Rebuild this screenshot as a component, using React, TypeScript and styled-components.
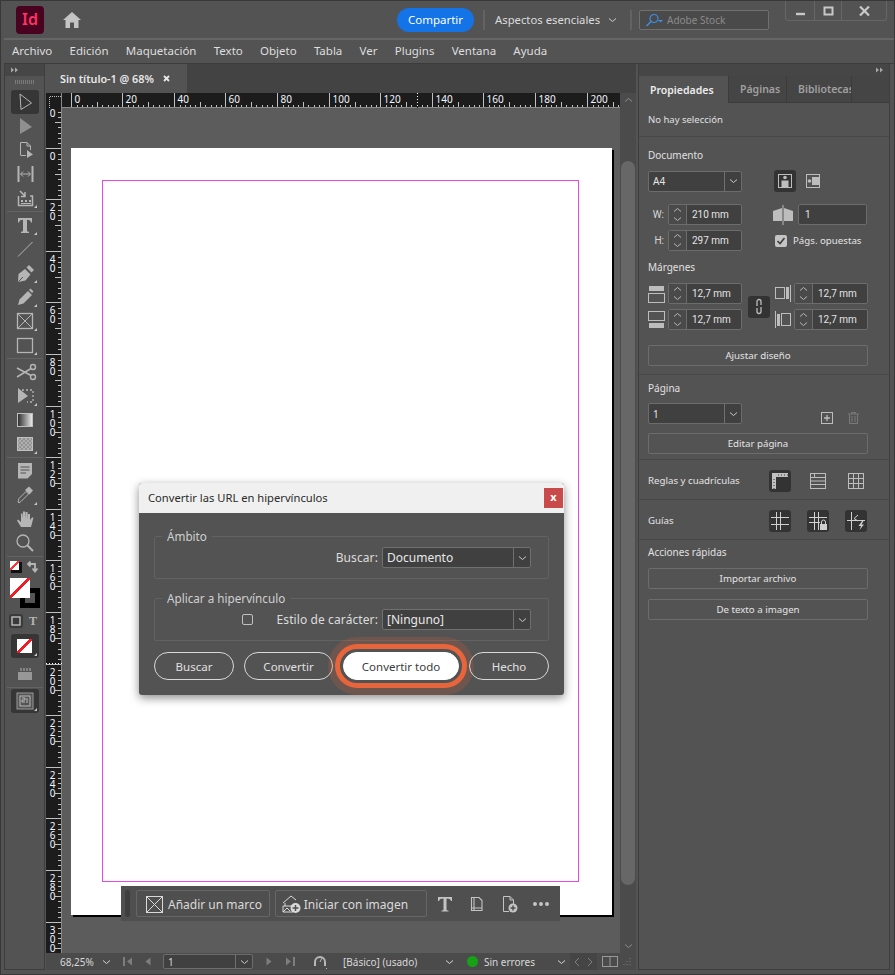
import React from 'react';
import styled, { createGlobalStyle } from 'styled-components';

const Global = createGlobalStyle`
  html, body { margin: 0; padding: 0; background: #535353; }
  * { box-sizing: border-box; }
  body { font-family: "Noto Sans", "Open Sans", sans-serif; color: #e4e4e4; font-size: 10.5px; }
`;

const Shell = styled.div`
  width: 895px;
  height: 975px;
  display: flex;
  flex-direction: column;
  background: #535353;
  border: 1px solid #383838;
  overflow: hidden;
`;

/* ---------- top bars ---------- */
const TitleBar = styled.header`
  height: 39px;
  margin-left: 3px;
  flex: none;
  display: flex;
  align-items: center;
  border-bottom: 2px solid #666;
  padding-left: 12px;
`;
const Logo = styled.div`
  width: 28px;
  height: 28px;
  border-radius: 4px;
  background: #49021f;
  color: #ff3366;
  font-weight: 600;
  font-size: 16px;
  line-height: 26px;
  text-align: center;
`;
const HomeIcon = styled.svg`
  margin-left: 19px;
  color: #c4c4c4;
`;
const ShareButton = styled.button`
  margin-left: 316px;
  width: 77px;
  height: 24px;
  border: 0;
  border-radius: 12px;
  background: #1473e6;
  color: #fff;
  font: inherit;
  font-size: 11.5px;
  padding: 0;
`;
const TitleSep = styled.span<{ $ml: number }>`
  width: 2px;
  height: 20px;
  margin-left: ${p => p.$ml}px;
  background: #636363;
`;
const WorkspaceName = styled.span`
  margin-left: 10px;
  width: 104px;
  flex: none;
  white-space: nowrap;
  font-size: 11.3px;
  color: #dcdcdc;
`;
const WorkspaceArrow = styled.span`
  margin-left: 9px;
  color: #cfcfcf;
`;
const StockSearch = styled.div`
  margin-left: 7px;
  width: 130px;
  height: 20px;
  border: 1px solid #6f6f6f;
  border-radius: 2px;
  background: #4a4a4a;
  display: flex;
  align-items: center;
  gap: 3px;
  color: #8a8a8a;
  font-size: 10px;
  padding-left: 4px;
`;
const SearchGlyph = styled.span`
  color: #3f8fe8;
`;
const WindowControls = styled.div`
  align-self: flex-start;
  margin-left: 16px;
  width: 102px;
  height: 20px;
  display: flex;
  border: 1px solid #666;
  border-top: 0;
  border-radius: 0 0 4px 4px;
  color: #c8c8c8;
`;
const WinButton = styled.div<{ $w: number }>`
  width: ${p => p.$w}px;
  display: flex;
  align-items: center;
  justify-content: center;
  & + & { border-left: 1px solid #666; }
`;
const MenuBar = styled.nav`
  height: 24px;
  flex: none;
  display: flex;
  align-items: center;
  gap: 17.25px;
  padding: 0 0 2px 8px;
  margin-left: 3px;
  font-size: 11.5px;
  color: #dedede;
  border-bottom: 1px solid #3c3c3c;
`;

/* ---------- main layout ---------- */
const Main = styled.div`
  flex: 1;
  min-height: 0;
  display: flex;
  padding: 0 4px 4px 3px;
`;

/* ---------- tools ---------- */
const Toolbox = styled.aside`
  width: 41px;
  flex: none;
  margin-right: 1px;
  border: 1px solid #3e3e3e;
  border-top: 0;
  display: flex;
  flex-direction: column;
  align-items: center;
`;
const ToolboxHead = styled.div`
  width: 100%;
  height: 12px;
  flex: none;
  background: #464646;
  color: #a8a8a8;
  display: flex;
  align-items: center;
  padding-left: 5px;
`;
const Grip = styled.div`
  width: 20px;
  height: 4px;
  margin: 4px 0 6px;
  flex: none;
  background: repeating-linear-gradient(90deg, #7a7a7a 0 1px, transparent 1px 2px);
`;
const ToolButton = styled.div<{ $on?: boolean; $flyout?: boolean; $mt?: number; $dim?: boolean }>`
  width: 28px;
  height: 24px;
  flex: none;
  margin-top: ${p => p.$mt ?? 0}px;
  position: relative;
  display: flex;
  align-items: center;
  justify-content: center;
  color: ${p => (p.$dim ? '#8f8f8f' : '#b5b5b5')};
  border-radius: 3px;
  background: ${p => (p.$on ? '#363636' : 'transparent')};
  ${p => p.$flyout && `
    &::after {
      content: '';
      position: absolute;
      right: 2px;
      bottom: 2px;
      border-left: 3px solid transparent;
      border-bottom: 3px solid #c8c8c8;
    }
  `}
`;
const ToolSep = styled.div`
  width: 36px;
  height: 1px;
  flex: none;
  margin: 1px 0;
  background: #636363;
`;
const ColorWell = styled.div`
  position: relative;
  width: 32px;
  height: 50px;
  flex: none;
  margin-top: 1px;
`;
const MiniSwatch = styled.div`
  position: absolute;
  left: 1px;
  top: 2px;
  width: 9px;
  height: 9px;
  background: linear-gradient(135deg, #fff 44%, #f33 44% 56%, #fff 56%);
  box-shadow: 2px 2px 0 0 #111, 2px 2px 0 1px #111;
`;
const SwapIcon = styled.svg`
  position: absolute;
  right: 2px;
  top: 2px;
  color: #b5b5b5;
`;
const FillSwatch = styled.div`
  position: absolute;
  left: 1px;
  top: 19px;
  width: 20px;
  height: 20px;
  z-index: 1;
  background: linear-gradient(135deg, #fff 45%, #f01c25 45% 55%, #fff 55%);
`;
const StrokeSwatch = styled.div`
  position: absolute;
  left: 11px;
  top: 29px;
  width: 20px;
  height: 20px;
  background: #555;
  border: 5px solid #000;
`;
const FormatRow = styled.div`
  display: flex;
  gap: 3px;
  align-items: center;
  margin-top: 5px;
  flex: none;
  color: #b5b5b5;
`;
const FormatBox = styled.div`
  width: 14px;
  height: 14px;
  background: #3a3a3a;
  border-radius: 3px;
  display: flex;
  align-items: center;
  justify-content: center;
`;
const ApplyNone = styled.div`
  width: 15px;
  height: 14px;
  background: linear-gradient(135deg, #fff 42%, #f01c25 42% 58%, #fff 58%);
`;
const FormatT = styled.span`
  font-family: "Liberation Serif", serif;
  font-weight: 700;
  font-size: 12px;
  line-height: 14px;
  width: 14px;
  text-align: center;
`;

/* ---------- document area ---------- */
const DocArea = styled.section`
  width: 590px;
  flex: none;
  margin-right: 2px;
  display: flex;
  flex-direction: column;
  min-height: 0;
`;
const DocTabs = styled.div`
  height: 29px;
  flex: none;
  display: flex;
  background: #434343;
`;
const DocTab = styled.div`
  width: 141px;
  background: #535353;
  display: flex;
  align-items: center;
  padding-left: 14px;
  gap: 9px;
  font-weight: 600;
  font-size: 10.8px;
  color: #e8e8e8;
`;
const DocBody = styled.div`
  flex: 1;
  min-height: 0;
  display: flex;
`;
const RulerCol = styled.div`
  width: 574px;
  flex: none;
  display: flex;
  flex-direction: column;
`;
const RulerRow = styled.div`
  height: 15px;
  flex: none;
  display: flex;
  background: #1c1c1c;
`;
const RulerCorner = styled.svg`
  display: block;
  flex: none;
`;
const HRulerSvg = styled.svg`
  display: block;
  flex: none;
`;
const VRulerSvg = styled.svg`
  display: block;
  flex: none;
  background: #1c1c1c;
`;
const RulerDigits = styled.text`
  writing-mode: vertical-rl;
  text-orientation: upright;
  letter-spacing: -4.6px;
  font-size: 10px;
  fill: #f2f6ff;
  stroke: none;
`;
const CanvasRow = styled.div`
  flex: 1;
  min-height: 0;
  display: flex;
`;
const Canvas = styled.div`
  position: relative;
  flex: 1;
  background: #5c5c5c;
  overflow: hidden;
`;
const Page = styled.div`
  position: absolute;
  left: 9px;
  top: 40px;
  width: 541px;
  height: 767px;
  padding: 32px 33px 33px 31px;
  background: #fff;
  box-shadow: 2px 2px 0 #000;
  display: flex;
`;
const MarginGuide = styled.div`
  flex: 1;
  border: 1px solid #e64be6;
`;
const ScrollBar = styled.div`
  width: 16px;
  flex: none;
  background: #4b4b4b;
  display: flex;
  flex-direction: column;
  align-items: center;
  color: #8d8d8d;
  padding: 4px 0;
`;
const ScrollThumb = styled.div`
  flex: 1;
  width: 14px;
  margin: 58px 0;
  border-radius: 7px;
  background: #676767;
`;

/* ---------- dialog ---------- */
const Dialog = styled.div`
  position: absolute;
  left: 77px;
  top: 375px;
  width: 425px;
  height: 212px;
  background: #535353;
  border-radius: 3px;
  box-shadow: 0 3px 10px rgba(0, 0, 0, 0.45);
  overflow: hidden;
  font-size: 12px;
  color: #dcdcdc;
`;
const DialogTitle = styled.div`
  height: 30px;
  background: #f0f0f0;
  color: #2a2a2a;
  display: flex;
  align-items: center;
  justify-content: space-between;
  padding: 0 1px 2px 9px;
  font-size: 11.2px;
`;
const CloseBox = styled.div`
  width: 19px;
  height: 20px;
  margin-top: 2px;
  background: #c84a4a;
  color: #fff;
  font-size: 11px;
  font-weight: 700;
  line-height: 18px;
  text-align: center;
`;
const DialogBody = styled.div`
  padding: 16px 15px 0;
  display: flex;
  flex-direction: column;
  gap: 12px;
`;
const Group = styled.fieldset`
  margin: 0;
  height: 50px;
  padding: 4px 17px 0 0;
  border: 1px solid #626262;
  border-radius: 2px;
  display: flex;
  align-items: center;
  justify-content: flex-end;
  gap: 4px;
  width: 395px;
`;
const GroupLegend = styled.legend`
  margin-left: 7px;
  padding: 0 5px;
  font-size: 11.7px;
  line-height: 14px;
  color: #d0d0d0;
`;
const GroupLabel = styled.span`
  letter-spacing: 0.1px;
`;
const DialogSelect = styled.div`
  width: 149px;
  height: 21px;
  display: flex;
  border: 1px solid #707070;
  border-radius: 2px;
  background: #404040;
  color: #e8e8e8;
  padding-left: 4px;
  align-items: center;
  justify-content: space-between;
`;
const DropArrow = styled.div`
  width: 17px;
  height: 100%;
  border-left: 1px solid #707070;
  display: flex;
  align-items: center;
  justify-content: center;
  color: #c8c8c8;
  flex: none;
`;
const DialogCheck = styled.span`
  width: 11px;
  height: 11px;
  border: 1px solid #c0c0c0;
  border-radius: 2px;
  margin-right: 20px;
`;
const DialogButtons = styled.div`
  display: flex;
  gap: 10px;
  margin-top: -1px;
`;
const Pill = styled.button<{ $w: number; $primary?: boolean }>`
  width: ${p => p.$w}px;
  height: 28px;
  padding: 0;
  border-radius: 14px;
  font: inherit;
  font-size: 11.5px;
  border: 1px solid ${p => (p.$primary ? '#fff' : '#d8d8d8')};
  background: ${p => (p.$primary ? '#fff' : 'transparent')};
  color: ${p => (p.$primary ? '#3c3c3c' : '#e0e0e0')};
  ${p => p.$primary && `
    box-shadow: 0 0 0 3px #535353, 0 0 0 8px #e8643a, 0 0 0 15px rgba(232, 100, 58, 0.18);
  `}
`;

/* ---------- contextual bar ---------- */
const ContextBar = styled.div`
  position: absolute;
  left: 59px;
  top: 778px;
  width: 439px;
  height: 35px;
  background: #4f4f4f;
  display: flex;
  align-items: center;
  padding-left: 4px;
  color: #c4c4c4;
`;
const BarGrip = styled.div`
  width: 5px;
  height: 27px;
  border-radius: 3px;
  background: #3e3e3e;
  margin-right: 6px;
`;
const BarButton = styled.div<{ $w: number; $pl: number; $gap: number }>`
  width: ${p => p.$w}px;
  height: 27px;
  margin-right: 5px;
  border: 1px solid #666;
  border-radius: 2px;
  display: flex;
  align-items: center;
  gap: ${p => p.$gap}px;
  padding: 1px 0 0 ${p => p.$pl}px;
  font-size: 12px;
  color: #dadada;
`;
const BarIcon = styled.div<{ $w: number }>`
  width: ${p => p.$w}px;
  display: flex;
  justify-content: center;
  align-items: center;
`;

/* ---------- status bar ---------- */
const StatusBar = styled.footer`
  height: 17px;
  flex: none;
  display: flex;
  align-items: center;
  background: #4b4b4b;
  color: #d8d8d8;
  font-size: 10px;
`;
const StatusCell = styled.div<{ $w: number; $ml?: number; $dim?: boolean }>`
  width: ${p => p.$w}px;
  height: 100%;
  flex: none;
  margin-left: ${p => p.$ml ?? 0}px;
  display: flex;
  align-items: center;
  justify-content: center;
  color: ${p => (p.$dim ? '#7d7d7d' : 'inherit')};
`;
const StatusText = styled.span<{ $w: number; $ml?: number }>`
  width: ${p => p.$w}px;
  flex: none;
  margin-left: ${p => p.$ml ?? 0}px;
  white-space: nowrap;
`;
const PageBox = styled.div`
  width: 90px;
  height: 15px;
  flex: none;
  margin-left: 8px;
  display: flex;
  align-items: center;
  justify-content: space-between;
  padding-left: 4px;
  border: 1px solid #6c6c6c;
  border-radius: 2px;
  background: #404040;
`;
const GreenDot = styled.span`
  width: 11px;
  height: 11px;
  flex: none;
  margin-left: 12px;
  border-radius: 50%;
  background: #16a116;
`;
const NavBox = styled.div`
  width: 27px;
  height: 100%;
  flex: none;
  margin-left: 3px;
  background: #454545;
  display: flex;
  align-items: center;
  justify-content: space-around;
  color: #7f7f7f;
`;

/* ---------- properties panel ---------- */
const PanelColumn = styled.aside`
  width: 252px;
  flex: none;
  border: 1px solid #3e3e3e;
  border-top: 0;
  display: flex;
  flex-direction: column;
`;
const PanelHead = styled.div`
  height: 12px;
  flex: none;
  background: #464646;
  color: #a8a8a8;
  display: flex;
  justify-content: flex-end;
  align-items: center;
  padding-right: 5px;
`;
const PanelTabs = styled.div`
  height: 27px;
  flex: none;
  display: flex;
  background: #454545;
  border-bottom: 1px solid #3c3c3c;
`;
const PanelTab = styled.div<{ $w: number; $on?: boolean }>`
  width: ${p => p.$w}px;
  flex: none;
  display: flex;
  align-items: center;
  padding-left: 11px;
  overflow: hidden;
  white-space: nowrap;
  font-weight: 600;
  font-size: 10.5px;
  color: ${p => (p.$on ? '#ececec' : '#a0a0a0')};
  background: ${p => (p.$on ? '#535353' : 'transparent')};
  border-right: 1px solid #3c3c3c;
  ${p => p.$on && 'height: 27px;'}
`;
const Section = styled.div<{ $h: number; $row?: boolean; $last?: boolean }>`
  height: ${p => p.$h}px;
  flex: none;
  padding: ${p => (p.$row ? '2px 21px 0 9px' : '0 21px 0 9px')};
  border-bottom: ${p => (p.$last ? '0' : '1px solid #484848')};
  display: flex;
  flex-direction: ${p => (p.$row ? 'row' : 'column')};
  font-size: 9.7px;
`;
const SectionLabel = styled.div<{ $mt: number; $mb: number; $size?: number }>`
  margin: ${p => p.$mt}px 0 ${p => p.$mb}px;
  height: 14px;
  line-height: 14px;
  white-space: nowrap;
  font-size: ${p => p.$size ?? 10}px;
  color: #e0e0e0;
`;
const Row = styled.div<{ $mt?: number }>`
  display: flex;
  align-items: center;
  justify-content: space-between;
  margin-top: ${p => p.$mt ?? 0}px;
`;
const Cluster = styled.div<{ $w?: number; $gap?: number; $pl?: number }>`
  display: flex;
  align-items: center;
  gap: ${p => p.$gap ?? 0}px;
  width: ${p => (p.$w ? `${p.$w}px` : 'auto')};
  padding-left: ${p => p.$pl ?? 0}px;
`;
const PageActions = styled.div`
  display: flex;
  align-items: center;
  gap: 15px;
  margin: 8px 8px 0 0;
`;
const Select = styled.div`
  width: 94px;
  height: 21px;
  display: flex;
  align-items: center;
  justify-content: space-between;
  padding-left: 4px;
  background: #404040;
  border: 1px solid #6c6c6c;
  border-radius: 2px;
  color: #e4e4e4;
  font-size: 10px;
`;
const PlainInput = styled.div`
  width: 69px;
  height: 21px;
  display: flex;
  align-items: center;
  padding-left: 6px;
  background: #404040;
  border: 1px solid #6c6c6c;
  border-radius: 2px;
  color: #e4e4e4;
  font-family: Roboto, sans-serif;
  font-size: 10px;
`;
const FieldLabel = styled.span`
  width: 20px;
  flex: none;
  text-align: right;
  padding-right: 4px;
  color: #d8d8d8;
  font-family: Roboto, sans-serif;
  font-size: 10px;
`;
const FieldBox = styled.div`
  width: 74px;
  height: 21px;
  display: flex;
  background: #404040;
  border: 1px solid #6c6c6c;
  border-radius: 2px;
  color: #e4e4e4;
`;
const Stepper = styled.div`
  width: 18px;
  flex: none;
  background: #4a4a4a;
  border-right: 1px solid #6c6c6c;
  display: flex;
  flex-direction: column;
  align-items: center;
  justify-content: space-around;
  color: #b8b8b8;
`;
const FieldValue = styled.span`
  padding-left: 5px;
  line-height: 19px;
  white-space: nowrap;
  font-family: Roboto, sans-serif;
  font-size: 10px;
`;
const SquareToggle = styled.div<{ $on?: boolean }>`
  width: 22px;
  height: 22px;
  flex: none;
  border-radius: 3px;
  display: flex;
  align-items: center;
  justify-content: center;
  color: #bdbdbd;
  background: ${p => (p.$on ? '#333' : 'transparent')};
`;
const CheckBox = styled.span`
  width: 12px;
  height: 12px;
  flex: none;
  border-radius: 2px;
  background: #c4c4c4;
  color: #3c3c3c;
  display: flex;
  align-items: center;
  justify-content: center;
`;
const IconSlot = styled.div<{ $w: number; $dim?: boolean }>`
  width: ${p => p.$w}px;
  flex: none;
  display: flex;
  justify-content: flex-start;
  color: ${p => (p.$dim ? '#7a7a7a' : '#bdbdbd')};
`;
const MarginStack = styled.div`
  display: flex;
  flex-direction: column;
  gap: 5px;
`;
const WideButton = styled.div<{ $mt: number }>`
  width: 220px;
  height: 21px;
  flex: none;
  margin-top: ${p => p.$mt}px;
  border: 1px solid #6c6c6c;
  border-radius: 2px;
  display: flex;
  align-items: center;
  justify-content: center;
  color: #e4e4e4;
`;
const InlineRow = styled.div`
  flex: 1;
  display: flex;
  align-items: center;
  justify-content: space-between;
`;
const ToggleSet = styled.div`
  display: flex;
  gap: 16px;
  margin-right: 1px;
`;
const GlyphSvg = styled.svg`
  display: block;
  flex: none;
`;

/* ---------- drawings ---------- */
const Svg = ({ s = 24, w, h, children }: { s?: number; w?: number; h?: number; children: React.ReactNode }) => (
  <GlyphSvg width={w ?? s} height={h ?? s} viewBox={`0 0 ${w ?? s} ${h ?? s}`} fill="none" stroke="currentColor" strokeWidth="1">
    {children}
  </GlyphSvg>
);

const Chevron = ({ up }: { up?: boolean }) => (
  <Svg w={9} h={6}><path d={up ? 'M1 4.5 4.5 1.5 8 4.5' : 'M1 1.5 4.5 4.5 8 1.5'} /></Svg>
);
const DoubleArrow = () => (
  <Svg w={9} h={6}><path d="M1 .5 4 3 1 5.5ZM5 .5 8 3 5 5.5Z" fill="currentColor" stroke="none" /></Svg>
);

const toolIcons: Record<string, React.ReactNode> = {
  select: <path d="M7 4 18.5 13 8 19.5Z" />,
  direct: <path d="M7 4 19 13 7 20Z" fill="currentColor" stroke="none" />,
  page: <><path d="M7.5 17V4.5H14L17.5 8V12M14 4.5V8H17.5M7.5 17.5H13" /><path d="M14 12 20 16.5 14 20Z" fill="currentColor" stroke="none" /></>,
  gap: <><path d="M5.5 4V20M19.5 4V20" strokeWidth="2" /><path d="M8 12H17M10 9.5 7.5 12 10 14.5M15 9.5 17.5 12 15 14.5" /></>,
  collect: <><path d="M5.5 10V19.5H19.5V10H17" strokeWidth="1.5" /><path d="M7 5 12 10M12 6V10.5H8" strokeWidth="1.5" /><path d="M8 14H10V16H8ZM12 14H14V16H12ZM16 14H18V16H16ZM8 17H18V18H8Z" fill="currentColor" stroke="none" /></>,
  type: <path d="M5 5H19V9.5H18C17.5 7.5 16.5 6.8 14 6.8V17.5C14 18.5 14.8 18.8 16 18.8V20H8V18.8C9.2 18.8 10 18.5 10 17.5V6.8C7.5 6.8 6.5 7.5 6 9.5H5Z" fill="currentColor" stroke="none" />,
  line: <path d="M5 19.5 19.5 5" />,
  pen: <><path d="M5 21 5.5 13 12 8 17.5 13.5 12.5 19.5Z" fill="currentColor" stroke="none" /><path d="M13.5 6.5 16 4 21 9 18.5 11.5Z" fill="currentColor" stroke="none" /><path d="M5.5 20.5 10 16" stroke="#535353" /></>,
  pencil: <><path d="M5 20 6.5 14.5 15 6 19 10 10.5 18.5Z" fill="currentColor" stroke="none" /><path d="M16 5 17.5 3.5 20.5 6.5 19 8Z" fill="currentColor" stroke="none" /></>,
  frame: <><rect x="4.5" y="4.5" width="15" height="15" strokeWidth="1.3" /><path d="M4.5 4.5 19.5 19.5M19.5 4.5 4.5 19.5" /></>,
  rect: <rect x="4.5" y="5.5" width="15" height="14" strokeWidth="1.3" />,
  scissors: <><circle cx="20" cy="7" r="2.5" strokeWidth="1.4" /><circle cx="20" cy="17" r="2.5" strokeWidth="1.4" /><path d="M4 8 18 15.5M4 17 18 8.5" strokeWidth="1.5" /></>,
  transform: <><path d="M5 4 15 12 5 19Z" fill="currentColor" stroke="none" /><path d="M9 6H20V18H14" strokeDasharray="2 2" strokeWidth="1.3" /></>,
  gradient: <><defs><linearGradient id="toolGrad" x1="0" x2="1"><stop offset="0" stopColor="#2a2a2a" /><stop offset="1" stopColor="#eee" /></linearGradient></defs><rect x="4.5" y="5.5" width="15" height="13" fill="url(#toolGrad)" stroke="#c0c0c0" /></>,
  feather: <><defs><pattern id="toolCheck" width="4" height="4" patternUnits="userSpaceOnUse"><rect width="4" height="4" fill="#999" /><rect width="2" height="2" fill="#2f2f2f" /><rect x="2" y="2" width="2" height="2" fill="#2f2f2f" /></pattern></defs><rect x="4.5" y="5.5" width="15" height="13" fill="url(#toolCheck)" stroke="#c0c0c0" /></>,
  note: <><path d="M5 4H19V15L14.5 19.5H5Z" fill="currentColor" stroke="none" /><path d="M7.5 8H16.5M7.5 11H16.5M7.5 14H13" stroke="#535353" /></>,
  dropper: <><path d="M6 20 5 19 6 15.5 13 8.5 15.5 11 8.5 18Z" /><path d="M12 7 16 3.5 20 7.5 16.5 11.5Z" fill="currentColor" stroke="none" /></>,
  hand: <path d="M8 20 4 13.5 5 12.5 8 15V6.5H9.5L10 12V4.5H12L12.5 12V5H14.5L15 12.5V7H17V13L19 10.5H20.5L18 20Z" fill="currentColor" stroke="none" />,
  zoom: <><circle cx="10" cy="10" r="6" strokeWidth="1.3" /><path d="M14.5 14.5 20 20" strokeWidth="2" /></>,
  gapTool: <><path d="M5 10H19V18H5Z" fill="currentColor" stroke="none" opacity=".7" /><path d="M8 6V9M11 6V9M14 6V9M17 6V9" /></>,
  screen: <><rect x="4" y="4" width="16" height="16" fill="#555" stroke="#999" /><rect x="7" y="7" width="10" height="10" stroke="#bbb" /><path d="M9 9H12V11H9V13H12M14 9V14" stroke="#bbb" /></>,
};
const Tool = ({ name, on, flyout, dim }: { name: string; on?: boolean; flyout?: boolean; dim?: boolean }) => (
  <ToolButton $on={on} $flyout={flyout} $dim={dim}>
    <Svg>{toolIcons[name]}</Svg>
  </ToolButton>
);

const Field = ({ value }: { value: string }) => (
  <FieldBox>
    <Stepper><Chevron up /><Chevron /></Stepper>
    <FieldValue>{value}</FieldValue>
  </FieldBox>
);

const HRuler = () => {
  const step = 51.6;
  const x0 = 8.5;
  const ticks: React.ReactNode[] = [];
  for (let i = 0; i < 11; i++) {
    const x = Math.round(x0 + i * step) + 0.5;
    ticks.push(<path key={i} d={`M${x} 0V15`} />);
    for (let j = 1; j < 10; j++) {
      const tx = Math.round(x + (j * step) / 10) + 0.5;
      ticks.push(<path key={`${i}-${j}`} d={`M${tx} ${j === 5 ? 9 : 12}V15`} />);
    }
    ticks.push(<text key={`t${i}`} x={x + 3} y={10} fill="#f2f6ff" stroke="none" fontSize="10">{i * 20}</text>);
  }
  return (
    <HRulerSvg width="558" height="15" stroke="#c0c0c0">
      {ticks}
      <path d="M0 14.5H558" stroke="#8a8a8a" />
      <path d="M355.5 0V15" stroke="#1c1c1c" />
      <path d="M355.5 0V15" stroke="#fff" strokeDasharray="1 2" />
    </HRulerSvg>
  );
};

const VRuler = () => {
  const step = 51.6;
  const y0 = 39.5;
  const items: React.ReactNode[] = [];
  for (let i = -1; i < 16; i++) {
    const y = Math.round(y0 + i * step) + 0.5;
    items.push(<path key={i} d={`M0 ${y}H16`} />);
    for (let j = 1; j < 10; j++) {
      const ty = Math.round(y + (j * step) / 10) + 0.5;
      items.push(<path key={`${i}-${j}`} d={`M${j === 5 ? 9 : 12} ${ty}H16`} />);
    }
    // the ruler starts inside the "20" above the origin: only its last digit shows
    items.push(
      <RulerDigits key={`t${i}`} x={6.5} y={i === -1 ? y + 9 : y}>
        {i === -1 ? '0' : String(i * 20)}
      </RulerDigits>
    );
  }
  return (
    <VRulerSvg width="16" height="845" stroke="#c0c0c0">
      {items}
      <path d="M15.5 0V845" stroke="#8a8a8a" />
      <path d="M0 555.5H16" stroke="#1c1c1c" />
      <path d="M0 555.5H16" stroke="#fff" strokeDasharray="1 2" />
    </VRulerSvg>
  );
};

const App = () => (
  <Shell>
    <Global />
    <TitleBar>
      <Logo>Id</Logo>
      <HomeIcon width="18" height="16" viewBox="0 0 18 16"><path d="M9 0 18 8H15.5V16H11V10.5H7V16H2.5V8H0Z" fill="currentColor" /></HomeIcon>
      <ShareButton>Compartir</ShareButton>
      <TitleSep $ml={9} />
      <WorkspaceName>Aspectos esenciales</WorkspaceName>
      <WorkspaceArrow><Chevron /></WorkspaceArrow>
      <TitleSep $ml={13} />
      <StockSearch>
        <SearchGlyph>
          <Svg w={20} h={14}><circle cx="10" cy="5.5" r="4" strokeWidth="1.2" /><path d="M7 8.5 2.5 13" strokeWidth="1.4" /><path d="M14 7H19L16.5 9.5Z" fill="currentColor" stroke="none" /></Svg>
        </SearchGlyph>
        Adobe Stock
      </StockSearch>
      <WindowControls>
        <WinButton $w={28}><Svg w={11} h={11}><path d="M1 9H10" strokeWidth="2.4" /></Svg></WinButton>
        <WinButton $w={27}><Svg w={11} h={10}><rect x="1.5" y="1.5" width="8" height="7" strokeWidth="2" /></Svg></WinButton>
        <WinButton $w={45}><Svg w={11} h={10}><path d="M1 .5 10 9.5M10 .5 1 9.5" strokeWidth="2.2" /></Svg></WinButton>
      </WindowControls>
    </TitleBar>
    <MenuBar>
      {['Archivo', 'Edición', 'Maquetación', 'Texto', 'Objeto', 'Tabla', 'Ver', 'Plugins', 'Ventana', 'Ayuda'].map(m => (
        <span key={m}>{m}</span>
      ))}
    </MenuBar>
    <Main>
      <Toolbox>
        <ToolboxHead><DoubleArrow /></ToolboxHead>
        <Grip />
        <Tool name="select" on />
        <Tool name="direct" dim />
        <Tool name="page" />
        <Tool name="gap" />
        <Tool name="collect" flyout />
        <ToolSep />
        <Tool name="type" flyout />
        <Tool name="line" />
        <Tool name="pen" flyout />
        <Tool name="pencil" flyout />
        <Tool name="frame" flyout />
        <Tool name="rect" flyout />
        <ToolSep />
        <Tool name="scissors" />
        <Tool name="transform" flyout />
        <Tool name="gradient" />
        <Tool name="feather" flyout />
        <ToolSep />
        <Tool name="note" />
        <Tool name="dropper" flyout />
        <Tool name="hand" />
        <Tool name="zoom" />
        <ToolSep />
        <ColorWell>
          <MiniSwatch />
          <SwapIcon width="12" height="12" viewBox="0 0 12 12"><path d="M1 3H8V10M5.5 7.5 8 10.5 10.5 7.5M3.5 .5 1 3 3.5 5.5" fill="none" stroke="currentColor" strokeWidth="1.8" /></SwapIcon>
          <FillSwatch />
          <StrokeSwatch />
        </ColorWell>
        <FormatRow>
          <FormatBox><Svg s={10}><rect x="1" y="1" width="8" height="8" strokeWidth="1.5" /></Svg></FormatBox>
          <FormatT>T</FormatT>
        </FormatRow>
        <ToolButton $on $flyout $mt={6}><ApplyNone /></ToolButton>
        <ToolButton $mt={4}><Svg>{toolIcons.gapTool}</Svg></ToolButton>
        <ToolSep />
        <Tool name="screen" on flyout />
      </Toolbox>

      <DocArea>
        <DocTabs>
          <DocTab>
            Sin título-1 @ 68%
            <Svg s={7}><path d="M1 1 6 6M6 1 1 6" strokeWidth="1.8" /></Svg>
          </DocTab>
        </DocTabs>
        <DocBody>
          <RulerCol>
            <RulerRow>
              <RulerCorner width="16" height="15">
                <path d="M3.5 15V3.5H15" stroke="#bbb" strokeDasharray="1 1" fill="none" />
                <path d="M15.5 0V15" stroke="#8a8a8a" />
              </RulerCorner>
              <HRuler />
            </RulerRow>
            <CanvasRow>
              <VRuler />
              <Canvas>
                <Page><MarginGuide /></Page>
                <Dialog>
                  <DialogTitle>
                    Convertir las URL en hipervínculos
                    <CloseBox>x</CloseBox>
                  </DialogTitle>
                  <DialogBody>
                    <Group>
                      <GroupLegend>Ámbito</GroupLegend>
                      <GroupLabel>Buscar:</GroupLabel>
                      <DialogSelect>Documento<DropArrow><Chevron /></DropArrow></DialogSelect>
                    </Group>
                    <Group>
                      <GroupLegend>Aplicar a hipervínculo</GroupLegend>
                      <DialogCheck />
                      <GroupLabel>Estilo de carácter:</GroupLabel>
                      <DialogSelect>[Ninguno]<DropArrow><Chevron /></DropArrow></DialogSelect>
                    </Group>
                    <DialogButtons>
                      <Pill $w={80}>Buscar</Pill>
                      <Pill $w={89}>Convertir</Pill>
                      <Pill $w={116} $primary>Convertir todo</Pill>
                      <Pill $w={80}>Hecho</Pill>
                    </DialogButtons>
                  </DialogBody>
                </Dialog>
                <ContextBar>
                  <BarGrip />
                  <BarButton $w={134} $pl={9} $gap={5}>
                    <Svg s={17}><rect x=".5" y=".5" width="16" height="16" /><path d="M.5 .5 16.5 16.5M16.5 .5 .5 16.5" /></Svg>
                    Añadir un marco
                  </BarButton>
                  <BarButton $w={153} $pl={6} $gap={2}>
                    <Svg s={20}><path d="M1 9 9 2 14 6M3 9V12M1 12H11V18H1Z" /><path d="M1 18 5 14 8 17" /><circle cx="13.5" cy="14" r="5" fill="currentColor" stroke="none" /><path d="M13.5 11V17M10.5 14H16.5" stroke="#4f4f4f" strokeWidth="1.5" /></Svg>
                    Iniciar con imagen
                  </BarButton>
                  <BarIcon $w={26}>
                    <Svg s={18}><path d="M2 2H16V6H15C14.5 4.3 13.5 3.5 10.5 3.5V14.5C10.5 15.3 11.2 15.5 12.5 15.5V16.5H5.5V15.5C6.8 15.5 7.5 15.3 7.5 14.5V3.5C4.5 3.5 3.5 4.3 3 6H2Z" fill="currentColor" stroke="none" /></Svg>
                  </BarIcon>
                  <BarIcon $w={38}>
                    <Svg s={16}><path d="M2.5 1.5V14.5H13V4.5L10 1.5ZM5 1.5V14.5M2.5 12H13" strokeWidth="1.1" /></Svg>
                  </BarIcon>
                  <BarIcon $w={26}>
                    <Svg s={20}><path d="M4.5 17.5V2.5H11L14.5 6V10M11 2.5V6H14.5M4.5 17.5H10" /><circle cx="14" cy="14" r="4.5" fill="currentColor" stroke="none" /><path d="M14 11.5V16.5M11.5 14H16.5" stroke="#4f4f4f" strokeWidth="1.5" /></Svg>
                  </BarIcon>
                  <BarIcon $w={38}>
                    <Svg w={16} h={4}><path d="M0 2A2 2 0 1 0 4 2 2 2 0 1 0 0 2M6 2A2 2 0 1 0 10 2 2 2 0 1 0 6 2M12 2A2 2 0 1 0 16 2 2 2 0 1 0 12 2" fill="currentColor" stroke="none" /></Svg>
                  </BarIcon>
                </ContextBar>
              </Canvas>
            </CanvasRow>
          </RulerCol>
          <ScrollBar>
            <Chevron up />
            <ScrollThumb />
            <Chevron />
          </ScrollBar>
        </DocBody>
        <StatusBar>
          <StatusText $w={40} $ml={14}>68,25%</StatusText>
          <StatusCell $w={13}><Chevron /></StatusCell>
          <StatusCell $w={28} $dim><Svg w={9} h={9}><path d="M1 0V9" strokeWidth="2" /><path d="M9 .5 4 4.5 9 8.5Z" fill="currentColor" stroke="none" /></Svg></StatusCell>
          <StatusCell $w={14} $dim><Svg w={6} h={9}><path d="M5.5 .5 .5 4.5 5.5 8.5Z" fill="currentColor" stroke="none" /></Svg></StatusCell>
          <PageBox>1<DropArrow><Chevron /></DropArrow></PageBox>
          <StatusCell $w={32} $dim><Svg w={6} h={9}><path d="M.5 .5 5.5 4.5 .5 8.5Z" fill="currentColor" stroke="none" /></Svg></StatusCell>
          <StatusCell $w={10} $dim><Svg w={9} h={9}><path d="M0 .5 5 4.5 0 8.5Z" fill="currentColor" stroke="none" /><path d="M8 0V9" strokeWidth="2" /></Svg></StatusCell>
          <StatusCell $w={20} $ml={15}><Svg s={14}><path d="M2 11V7A5 5 0 0 1 12 7V11" strokeWidth="2" stroke="#b8b8b8" /><path d="M7 7 9 3" stroke="#b8b8b8" /><path d="M13 13H14V14H13Z" fill="#b8b8b8" stroke="none" /></Svg></StatusCell>
          <StatusText $w={88} $ml={13}>[Básico] (usado)</StatusText>
          <StatusCell $w={12} $ml={12}><Chevron /></StatusCell>
          <GreenDot />
          <StatusText $w={68} $ml={6}>Sin errores</StatusText>
          <StatusCell $w={12} $ml={3}><Chevron /></StatusCell>
          <NavBox>
            <Svg w={6} h={10}><path d="M5 1 1 5 5 9" /></Svg>
            <Svg w={6} h={10}><path d="M1 1 5 5 1 9" /></Svg>
          </NavBox>
          <StatusCell $w={16} $ml={5} $dim><Svg w={16} h={11}><rect x=".5" y=".5" width="15" height="10" stroke="#999" /><path d="M8 0V11" stroke="#999" /></Svg></StatusCell>
          <StatusCell $w={12} $ml={3} $dim><Svg w={10} h={10}><path d="M8 1V3M5 4V6M8 4V6M2 7V9M5 7V9M8 7V9" strokeDasharray="1 1" /></Svg></StatusCell>
        </StatusBar>
      </DocArea>

      <PanelColumn>
        <PanelHead><DoubleArrow /></PanelHead>
        <PanelTabs>
          <PanelTab $w={90} $on>Propiedades</PanelTab>
          <PanelTab $w={58}>Páginas</PanelTab>
          <PanelTab $w={65}>Bibliotecas</PanelTab>
        </PanelTabs>
        <Section $h={34}>
          <SectionLabel $mt={10} $mb={0} $size={9.5}>No hay selección</SectionLabel>
        </Section>
        <Section $h={238}>
          <SectionLabel $mt={11} $mb={8}>Documento</SectionLabel>
          <Row>
            <Select>A4<DropArrow><Chevron /></DropArrow></Select>
            <Cluster $w={94} $gap={6}>
              <SquareToggle $on>
                <Svg s={14}><rect x=".5" y=".5" width="13" height="13" /><circle cx="7" cy="3.5" r="1.8" fill="currentColor" stroke="none" /><path d="M3.5 6.5H10.5V13.5H3.5Z" fill="currentColor" stroke="none" /></Svg>
              </SquareToggle>
              <SquareToggle>
                <Svg s={16}><rect x="1.5" y="1.5" width="13" height="13" /><path d="M7 4H14V12H7Z" fill="currentColor" stroke="none" /><circle cx="4.5" cy="8" r="1.8" fill="currentColor" stroke="none" /></Svg>
              </SquareToggle>
            </Cluster>
          </Row>
          <Row $mt={12}>
            <Cluster><FieldLabel>W:</FieldLabel><Field value="210 mm" /></Cluster>
            <Cluster $w={95} $gap={5}>
              <IconSlot $w={20}><Svg s={20}><path d="M0 6 9 3V16H0ZM20 6 11 3V16H20Z" fill="currentColor" stroke="none" /><path d="M10 0V20" /></Svg></IconSlot>
              <PlainInput>1</PlainInput>
            </Cluster>
          </Row>
          <Row $mt={5}>
            <Cluster><FieldLabel>H:</FieldLabel><Field value="297 mm" /></Cluster>
            <Cluster $w={95} $gap={6} $pl={2}>
              <CheckBox><Svg s={10}><path d="M1.5 5 4 7.5 8.5 2" strokeWidth="1.6" /></Svg></CheckBox>
              Págs. opuestas
            </Cluster>
          </Row>
          <SectionLabel $mt={9} $mb={9}>Márgenes</SectionLabel>
          <Row>
            <MarginStack>
              <Cluster>
                <IconSlot $w={20}><Svg w={17} h={18}><path d="M1 1H16V6H1Z" fill="currentColor" stroke="none" /><rect x=".5" y="8.5" width="16" height="9" /></Svg></IconSlot>
                <Field value="12,7 mm" />
              </Cluster>
              <Cluster>
                <IconSlot $w={20}><Svg w={17} h={18}><rect x=".5" y=".5" width="16" height="9" /><path d="M1 12H16V17H1Z" fill="currentColor" stroke="none" /></Svg></IconSlot>
                <Field value="12,7 mm" />
              </Cluster>
            </MarginStack>
            <SquareToggle $on><Svg w={10} h={17}><path d="M3 8V3.5A2 2 0 0 1 7 3.5V7M7 9V13.5A2 2 0 0 1 3 13.5V10" strokeWidth="1.3" /></Svg></SquareToggle>
            <MarginStack>
              <Cluster>
                <IconSlot $w={19}><Svg w={17} h={17}><rect x=".5" y="2.5" width="9" height="11" /><path d="M11 2H14V14H11Z" fill="currentColor" stroke="none" /><path d="M15.5 0V17" /></Svg></IconSlot>
                <Field value="12,7 mm" />
              </Cluster>
              <Cluster>
                <IconSlot $w={19}><Svg w={17} h={17}><path d="M.5 0V17" /><path d="M2 3H5V15H2Z" fill="currentColor" stroke="none" /><rect x="6.5" y="2.5" width="9" height="12" /></Svg></IconSlot>
                <Field value="12,7 mm" />
              </Cluster>
            </MarginStack>
          </Row>
          <WideButton $mt={15}>Ajustar diseño</WideButton>
        </Section>
        <Section $h={85}>
          <SectionLabel $mt={6} $mb={8}>Página</SectionLabel>
          <Row>
            <Select>1<DropArrow><Chevron /></DropArrow></Select>
            <PageActions>
              <IconSlot $w={12}><Svg s={12}><rect x=".5" y=".5" width="11" height="11" /><path d="M6 3V9M3 6H9" strokeWidth="1.3" /></Svg></IconSlot>
              <IconSlot $w={12} $dim><Svg w={11} h={12}><path d="M0 2H11M3.5 2V.5H7.5V2M1.5 2.5V11.5H9.5V2.5M4 4V10M7 4V10" /></Svg></IconSlot>
            </PageActions>
          </Row>
          <WideButton $mt={9}>Editar página</WideButton>
        </Section>
        <Section $h={40} $row>
          <InlineRow>
            Reglas y cuadrículas
            <ToggleSet>
              <SquareToggle $on>
                <Svg s={16}><path d="M0 0H16V4H4V16H0Z" fill="#c0c0c0" stroke="none" /><path d="M6 2H16M2 6V16" stroke="#333" strokeDasharray="1 2" /></Svg>
              </SquareToggle>
              <SquareToggle>
                <Svg s={16}><rect x=".5" y=".5" width="15" height="15" /><path d="M0 4.5H16M0 8H16M0 11.5H16M4.5 0V4.5" /></Svg>
              </SquareToggle>
              <SquareToggle>
                <Svg s={16}><rect x=".5" y=".5" width="15" height="15" /><path d="M0 5.5H16M0 10.5H16M5.5 0V16M10.5 0V16" /></Svg>
              </SquareToggle>
            </ToggleSet>
          </InlineRow>
        </Section>
        <Section $h={40} $row>
          <InlineRow>
            Guías
            <ToggleSet>
              <SquareToggle $on><Svg s={18}><path d="M0 5.5H18M0 12.5H18M5.5 0V18M9.5 0V18" stroke="#d0d0d0" /></Svg></SquareToggle>
              <SquareToggle $on><Svg s={18}><path d="M0 5.5H18M0 10.5H11M5.5 0V18M9.5 0V18" stroke="#d0d0d0" /><path d="M11 12H18V18H11Z" fill="#d0d0d0" stroke="none" /><path d="M12.5 12V10A2 2 0 0 1 16.5 10V12" stroke="#d0d0d0" /></Svg></SquareToggle>
              <SquareToggle $on><Svg s={18}><path d="M0 8.5H18M4.5 0V18M11 3 7 6.5 11 9" stroke="#d0d0d0" /><path d="M15 9 11.5 14H14L12.5 18 17 12.5H14.5L16.5 9Z" fill="#d0d0d0" stroke="none" /></Svg></SquareToggle>
            </ToggleSet>
          </InlineRow>
        </Section>
        <Section $h={90} $last>
          <SectionLabel $mt={5} $mb={9}>Acciones rápidas</SectionLabel>
          <WideButton $mt={0}>Importar archivo</WideButton>
          <WideButton $mt={10}>De texto a imagen</WideButton>
        </Section>
      </PanelColumn>
    </Main>
  </Shell>
);

export default App;
